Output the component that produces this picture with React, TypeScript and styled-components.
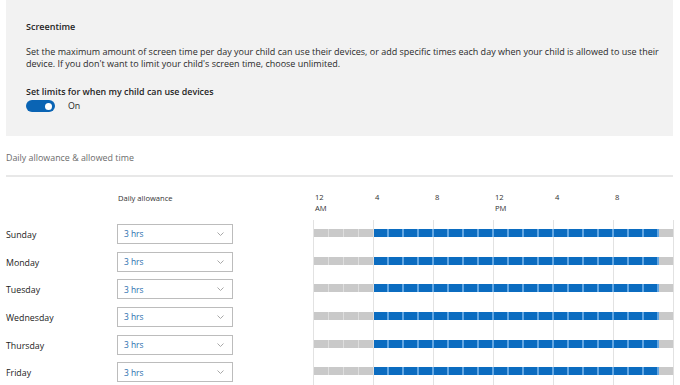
import React from "react";
import styled, { createGlobalStyle } from "styled-components";

const GlobalStyle = createGlobalStyle`
  body {
    margin: 0;
    background: #fff;
    font-family: "Open Sans", "Noto Sans", sans-serif;
    color: #1f1f1f;
  }
`;

const Page = styled.div`
  width: 680px;
  height: 385px;
  overflow: hidden;
  box-sizing: border-box;
  padding: 0 7px 0 6px;
`;

const Panel = styled.section`
  height: 136px;
  box-sizing: border-box;
  background: #f2f2f2;
  padding: 20px 20px 0;
`;

const Title = styled.h2`
  margin: 0;
  font-size: 9px;
  font-weight: 600;
  line-height: 14px;
`;

const Desc = styled.p`
  margin: 12px 0 0;
  font-size: 9px;
  line-height: 12px;
  color: #2a2a2a;
  white-space: nowrap;
`;

const Label = styled.div`
  margin-top: 15px;
  font-size: 8.9px;
  font-weight: 600;
  line-height: 14px;
`;

const ToggleRow = styled.div`
  display: flex;
  align-items: center;
  gap: 13px;
  height: 14px;
  font-size: 8.8px;
`;

const Switch = styled.div<{ $on: boolean }>`
  width: 29px;
  height: 12px;
  border-radius: 7px;
  background: ${({ $on }) => ($on ? "#0a64b4" : "#999")};
  display: flex;
  align-items: center;
  justify-content: ${({ $on }) => ($on ? "flex-end" : "flex-start")};
  padding: 0 3px;
  box-sizing: border-box;
`;

const Knob = styled.span`
  width: 7px;
  height: 7px;
  border-radius: 50%;
  background: #fff;
`;

const SectionHeading = styled.div`
  margin-top: 15px;
  font-size: 8.9px;
  line-height: 14px;
  color: #6b6b6b;
`;

const Divider = styled.hr`
  margin: 10px 0 0;
  border: none;
  border-top: 2px solid #e8e8e8;
`;

const Table = styled.div`
  display: grid;
  grid-template-columns: 111px 116px 80px 361px;
  margin-top: 15px;
`;

const HeaderCell = styled.div<{ $indent?: boolean }>`
  height: 27px;
  font-size: 7.6px;
  line-height: 11px;
  color: #333;
  padding-top: 1px;
  padding-left: ${({ $indent }) => ($indent ? "1px" : "0")};
`;

const Hours = styled.div`
  display: grid;
  grid-template-columns: repeat(6, 60px);
  height: 27px;
`;

const HourLabel = styled.div`
  padding-left: 2px;
  font-size: 7.6px;
  line-height: 11px;
  color: #333;
`;

const Day = styled.div`
  height: 27.7px;
  display: flex;
  align-items: center;
  padding-top: 2px;
  box-sizing: border-box;
  font-size: 8.8px;
  color: #222;
`;

const SelectCell = styled.div`
  height: 27.7px;
  display: flex;
  align-items: center;
`;

const Select = styled.div`
  width: 116px;
  height: 20px;
  box-sizing: border-box;
  border: 1px solid #bcbcbc;
  background: #fff;
  display: flex;
  align-items: center;
  justify-content: space-between;
  padding: 0 8px 0 6px;
  font-size: 8.4px;
  color: #2a6fae;
`;

const Spacer = styled.div`
  height: 27.7px;
`;

const Track = styled.div`
  height: 27.7px;
  box-sizing: border-box;
  padding-top: 9px;
  background: repeating-linear-gradient(
    to right,
    #e2e2e2 0 1px,
    transparent 1px 60px
  );
`;

const Blocks = styled.div`
  display: flex;
  padding-left: 1px;
`;

const Block = styled.span<{ $on: boolean }>`
  width: 15px;
  height: 8px;
  flex: none;
  background: ${({ $on }) =>
    $on
      ? "linear-gradient(to right, #0b6cc0 0 13px, #62a6e2 13px 15px)"
      : "linear-gradient(to right, #c9c9c9 0 14px, #dedede 14px 15px)"};
`;

const Chevron = () => (
  <svg width="7" height="4" viewBox="0 0 7 4" fill="none">
    <path d="M0.5 0.5 L3.5 3.5 L6.5 0.5" stroke="#a8a8a8" strokeWidth="1" />
  </svg>
);

const days = ["Sunday", "Monday", "Tuesday", "Wednesday", "Thursday", "Friday"];
const hourLabels = [
  ["12", "AM"],
  ["4"],
  ["8"],
  ["12", "PM"],
  ["4"],
  ["8"],
];
// allowed from 4 AM until 11 PM
const slots = Array.from({ length: 24 }, (_, h) => h >= 4 && h < 23);

export default function App() {
  return (
    <Page>
      <GlobalStyle />
      <Panel>
        <Title>Screentime</Title>
        <Desc>
          Set the maximum amount of screen time per day your child can use their devices, or add
          specific times each day when your child is allowed to use their
          <br />
          device. If you don't want to limit your child's screen time, choose unlimited.
        </Desc>
        <Label>Set limits for when my child can use devices</Label>
        <ToggleRow>
          <Switch $on>
            <Knob />
          </Switch>
          <span>On</span>
        </ToggleRow>
      </Panel>

      <SectionHeading>Daily allowance &amp; allowed time</SectionHeading>
      <Divider />

      <Table>
        <HeaderCell />
        <HeaderCell $indent>Daily allowance</HeaderCell>
        <HeaderCell />
        <Hours>
          {hourLabels.map((l, i) => (
            <HourLabel key={i}>
              {l.map((t) => (
                <div key={t}>{t}</div>
              ))}
            </HourLabel>
          ))}
        </Hours>

        {days.map((d) => (
          <React.Fragment key={d}>
            <Day>{d}</Day>
            <SelectCell>
              <Select>
                <span>3 hrs</span>
                <Chevron />
              </Select>
            </SelectCell>
            <Spacer />
            <Track>
              <Blocks>
                {slots.map((on, i) => (
                  <Block key={i} $on={on} />
                ))}
              </Blocks>
            </Track>
          </React.Fragment>
        ))}
      </Table>
    </Page>
  );
}
